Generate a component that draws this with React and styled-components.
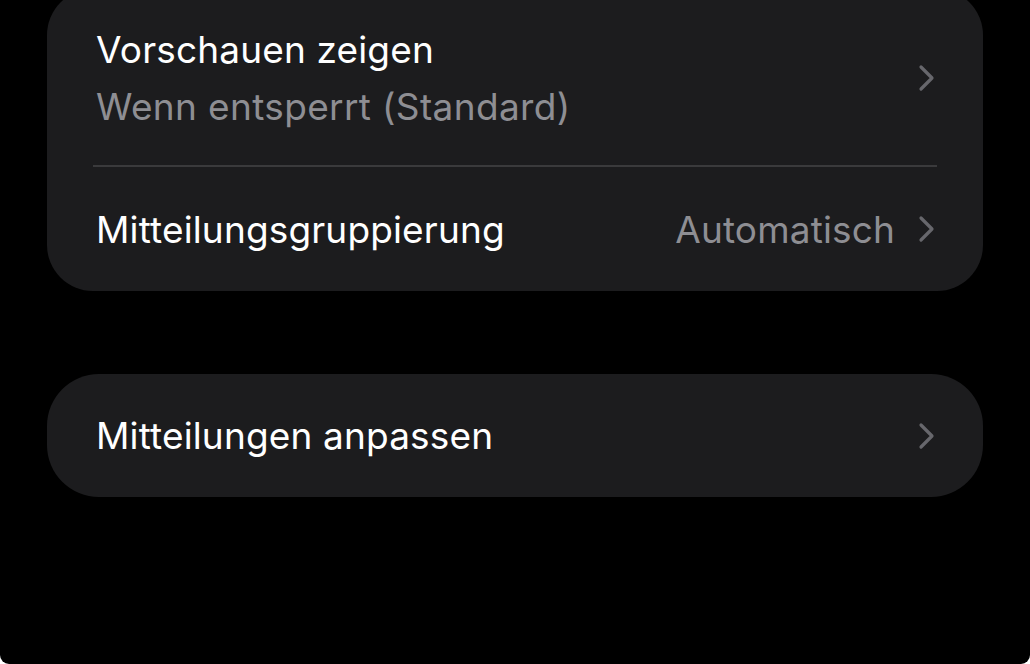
import React from 'react'
import styled, { createGlobalStyle } from 'styled-components'

const GlobalStyle = createGlobalStyle`
    html, body {
        margin: 0;
        padding: 0;
        background: #ffffff;
    }
    body {
        font-family: Inter, "Noto Sans", "Liberation Sans", sans-serif;
        -webkit-font-smoothing: antialiased;
    }
`

const Chevron = () => (
    <ChevronIcon viewBox="0 0 17 28" width="17" height="28">
        <path d="M3 3 L14 14 L3 25" fill="none" stroke="currentColor" strokeWidth="3.2" strokeLinecap="round" strokeLinejoin="round" />
    </ChevronIcon>
)

const App = () => {
    return (
        <Screen>
            <GlobalStyle />
            <Group>
                <Row tall>
                    <Texts>
                        <Label>Vorschauen zeigen</Label>
                        <SubLabel>Wenn entsperrt (Standard)</SubLabel>
                    </Texts>
                    <Chevron />
                </Row>
                <Separator />
                <Row>
                    <Label>Mitteilungsgruppierung</Label>
                    <Right>
                        <Value>Automatisch</Value>
                        <Chevron />
                    </Right>
                </Row>
            </Group>
            <Group single>
                <Row single>
                    <Label>Mitteilungen anpassen</Label>
                    <Chevron />
                </Row>
            </Group>
        </Screen>
    )
}

const Screen = styled.div`
    width: 1030px;
    height: 664px;
    background: #000000;
    border-radius: 0 0 9px 9px;
    overflow: hidden;
    display: flex;
    flex-direction: column;
    gap: 83px;
    padding: 0 47px;
    box-sizing: border-box;
`
const Group = styled.div`
    background: #1c1c1e;
    border-radius: ${props => props.single ? "52px" : "46px"};
    margin-top: ${props => props.single ? "0" : "-11px"};
    display: flex;
    flex-direction: column;
`
const Row = styled.div`
    display: flex;
    align-items: center;
    justify-content: space-between;
    height: ${props => props.tall ? "176px" : props.single ? "123px" : "124px"};
    padding: ${props => props.tall ? "2px 48px 0 49px" : "0 48px 0 49px"};
    box-sizing: border-box;
`
const Texts = styled.div`
    display: flex;
    flex-direction: column;
    gap: 12px;
`
const Label = styled.div`
    color: #ffffff;
    font-size: 37px;
    line-height: 45px;
    letter-spacing: 0.15px;
`
const SubLabel = styled(Label)`
    color: #8e8e93;
    letter-spacing: 0.35px;
`
const Right = styled.div`
    display: flex;
    align-items: center;
    gap: 23px;
`
const Value = styled(Label)`
    color: #8e8e93;
`
const Separator = styled.div`
    height: 2px;
    background: #3a3a3c;
    margin: 0 46px 0 46px;
`
const ChevronIcon = styled.svg`
    color: #67676c;
    flex-shrink: 0;
`

export default App
